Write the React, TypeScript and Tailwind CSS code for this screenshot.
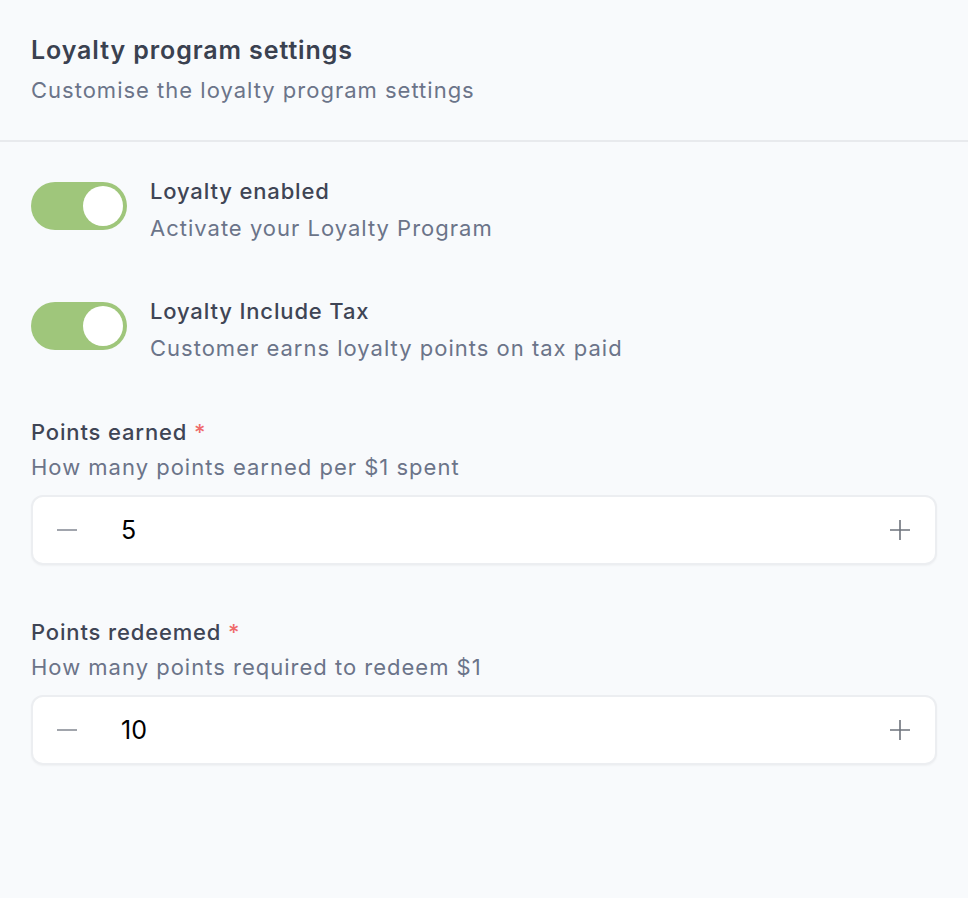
import React, { useState } from "react";

function Toggle({ on }: { on: boolean }) {
  return (
    <button
      className={`flex h-12 w-24 shrink-0 items-center rounded-full p-1 ${
        on ? "justify-end bg-[#9fc67b]" : "justify-start bg-gray-300"
      }`}
    >
      <span className="h-10 w-10 rounded-full bg-white" />
    </button>
  );
}

function NumberField({
  label,
  hint,
  value,
}: {
  label: string;
  hint: string;
  value: number;
}) {
  const [n, setN] = useState(value);
  return (
    <div>
      <p className="text-[22px] font-medium leading-[30px] tracking-[0.85px] text-[#3f4555]">
        {label} <span className="text-[#ef6b6b]">*</span>
      </p>
      <p className="mt-[5px] text-[22px] leading-[30px] tracking-[1px] text-[#6b7489]">
        {hint}
      </p>
      <div className="mt-[13px] flex h-[70px] items-center rounded-xl border-2 border-[#eceef1] bg-white pl-[22px] pr-[23px] shadow-[0_1px_2px_rgba(0,0,0,0.04)]">
        <button onClick={() => setN(n - 1)} className="text-[#8a8f98]">
          <svg width="24" height="24" viewBox="0 0 24 24" fill="none" stroke="currentColor" strokeWidth="1.6">
            <path d="M2 12h20" />
          </svg>
        </button>
        <span className="ml-[42px] flex-1 text-[25px] leading-none text-black">{n}</span>
        <button onClick={() => setN(n + 1)} className="text-[#6e737c]">
          <svg width="24" height="24" viewBox="0 0 24 24" fill="none" stroke="currentColor" strokeWidth="1.6">
            <path d="M2 12h20M12 2v20" />
          </svg>
        </button>
      </div>
    </div>
  );
}

function ToggleRow({ title, hint, className }: { title: string; hint: string; className?: string }) {
  return (
    <div className={`flex gap-[23px] ${className ?? ""}`}>
      <Toggle on />
      <div>
        <p className="-mt-[6px] text-[22px] font-medium leading-[30px] tracking-[0.85px] text-[#3f4555]">
          {title}
        </p>
        <p className="mt-[7px] text-[22px] leading-[30px] tracking-[1px] text-[#6b7489]">
          {hint}
        </p>
      </div>
    </div>
  );
}

export default function App() {
  return (
    <div
      className="min-h-[898px] bg-[#f8fafc]"
      style={{ fontFamily: "Inter, 'Noto Sans', sans-serif" }}
    >
      <div className="border-b-2 border-[#e8eaed] px-[31px] pb-[35px] pt-[34px]">
        <h1 className="text-[25px] font-semibold leading-[32px] tracking-[0.9px] text-[#3a4150]">
          Loyalty program settings
        </h1>
        <p className="mt-[9px] text-[22px] leading-[30px] tracking-[1px] text-[#6b7489]">
          Customise the loyalty program settings
        </p>
      </div>

      <div className="px-[31px] pt-[40px]">
        <ToggleRow title="Loyalty enabled" hint="Activate your Loyalty Program" />
        <ToggleRow
          className="mt-[59px]"
          title="Loyalty Include Tax"
          hint="Customer earns loyalty points on tax paid"
        />

        <div className="mt-[54px] flex flex-col gap-[52px]">
          <NumberField label="Points earned" hint="How many points earned per $1 spent" value={5} />
          <NumberField label="Points redeemed" hint="How many points required to redeem $1" value={10} />
        </div>
      </div>
    </div>
  );
}
